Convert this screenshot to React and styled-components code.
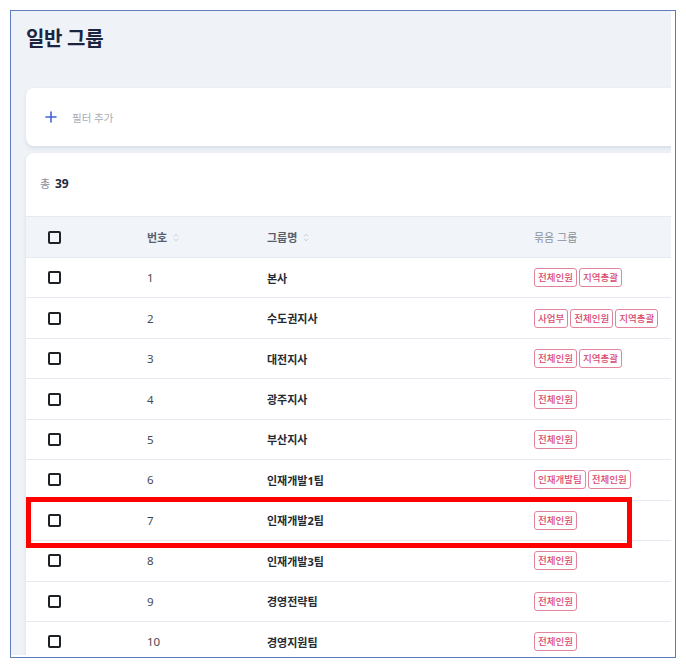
import React from 'react';
import styled, { createGlobalStyle } from 'styled-components';

const Global = createGlobalStyle`
  body {
    margin: 0;
    background: #ffffff;
    font-family: "Noto Sans", "Noto Sans CJK KR", sans-serif;
  }
`;

const Frame = styled.div`
  margin: 10px;
  width: 666px;
  height: 648px;
  box-sizing: border-box;
  border: 1px solid #5f7cbf;
  display: flex;
  background: #ffffff;
  position: relative;
`;

const Viewport = styled.div`
  width: 660px;
  height: 644px;
  background: #eff3f8;
  overflow: hidden;
  padding: 0 0 0 15px;
  box-sizing: border-box;
`;

const Title = styled.h1`
  margin: 0;
  padding-top: 14px;
  height: 77px;
  box-sizing: border-box;
  font-size: 20px;
  font-weight: 700;
  color: #1b2540;
  letter-spacing: -0.3px;
  line-height: 28px;
`;

const Card = styled.div`
  width: 700px;
  background: #ffffff;
  border-radius: 8px;
  box-shadow: 0 2px 4px rgba(40, 60, 100, 0.12);
`;

const FilterCard = styled(Card)`
  height: 58px;
  display: flex;
  align-items: center;
  gap: 15px;
  padding-left: 19px;
  box-sizing: border-box;
  margin-bottom: 7px;
`;

const FilterLabel = styled.span`
  font-size: 10.5px;
  color: #a8adb8;
  padding-top: 1px;
`;

const TableCard = styled(Card)`
  padding-top: 16px;
`;

const Total = styled.div`
  height: 47px;
  padding-left: 14px;
  font-size: 11px;
  color: #8c929c;
  line-height: 30px;
  b {
    font-size: 12px;
    color: #1f2a44;
    font-weight: 700;
    margin-left: 2px;
  }
`;

const Row = styled.div`
  display: grid;
  grid-template-columns: 121px 120px 267px 1fr;
  align-items: center;
  height: ${p => (p.$head ? '41px' : '40.45px')};
  box-sizing: border-box;
  background: ${p => (p.$head ? '#f1f4f8' : '#ffffff')};
  border-top: 1px solid #e6eaf0;
  position: relative;
`;

const Cell = styled.div`
  display: flex;
  align-items: center;
  gap: ${p => (p.$tags ? '2px' : '6px')};
  font-size: 11.5px;
  color: ${p => (p.$head ? '#5a606b' : '#454a52')};
  font-weight: ${p => (p.$bold || p.$head ? 700 : 400)};
  ${p => p.$bold && 'color: #262b33; font-size: 11px;'}
  ${p => p.$head && 'font-size: 11px;'}
  ${p => p.$head && p.$light && 'font-weight: 400; color: #8d929b;'}
`;

const CheckCell = styled(Cell)`
  padding-left: 22px;
`;

const Checkbox = styled.span`
  width: 13px;
  height: 13px;
  box-sizing: border-box;
  border: 2px solid #1e2126;
  border-radius: 2px;
`;

const Tag = styled.span`
  font-size: 9.5px;
  line-height: 13px;
  padding: 2px 3px;
  color: #d9486f;
  border: 1px solid #e3849d;
  border-radius: 3px;
  font-weight: 500;
`;

const Highlight = styled.div`
  position: absolute;
  z-index: 2;
  left: 0;
  top: -4px;
  width: 606px;
  height: 51px;
  box-sizing: border-box;
  border: 5px solid #ff0000;
  pointer-events: none;
`;

const Plus = () => (
  <svg width="12" height="12" viewBox="0 0 12 12">
    <path d="M6 1v10M1 6h10" stroke="#4361d8" strokeWidth="1.6" strokeLinecap="round" />
  </svg>
);

const Sort = () => (
  <svg width="6" height="9" viewBox="0 0 6 9">
    <path d="M1 3.2 3 1.2 5 3.2M1 5.8 3 7.8 5 5.8" fill="none" stroke="#c4c8cf" strokeWidth="0.9" />
  </svg>
);

const rows = [
  [1, '본사', ['전체인원', '지역총괄']],
  [2, '수도권지사', ['사업부', '전체인원', '지역총괄']],
  [3, '대전지사', ['전체인원', '지역총괄']],
  [4, '광주지사', ['전체인원']],
  [5, '부산지사', ['전체인원']],
  [6, '인재개발1팀', ['인재개발팀', '전체인원']],
  [7, '인재개발2팀', ['전체인원']],
  [8, '인재개발3팀', ['전체인원']],
  [9, '경영전략팀', ['전체인원']],
  [10, '경영지원팀', ['전체인원']],
];

export default function App() {
  return (
    <>
      <Global />
      <Frame>
        <Viewport>
          <Title>일반 그룹</Title>
          <FilterCard>
            <Plus />
            <FilterLabel>필터 추가</FilterLabel>
          </FilterCard>
          <TableCard>
            <Total>
              총 <b>39</b>
            </Total>
            <Row $head>
              <CheckCell><Checkbox /></CheckCell>
              <Cell $head>번호 <Sort /></Cell>
              <Cell $head>그룹명 <Sort /></Cell>
              <Cell $head $light>묶음 그룹</Cell>
            </Row>
            {rows.map(([no, name, tags]) => (
              <Row key={no}>
                <CheckCell><Checkbox /></CheckCell>
                <Cell>{no}</Cell>
                <Cell $bold>{name}</Cell>
                <Cell $tags>
                  {tags.map(t => <Tag key={t}>{t}</Tag>)}
                </Cell>
                {no === 7 && <Highlight />}
              </Row>
            ))}
          </TableCard>
        </Viewport>
      </Frame>
    </>
  );
}
